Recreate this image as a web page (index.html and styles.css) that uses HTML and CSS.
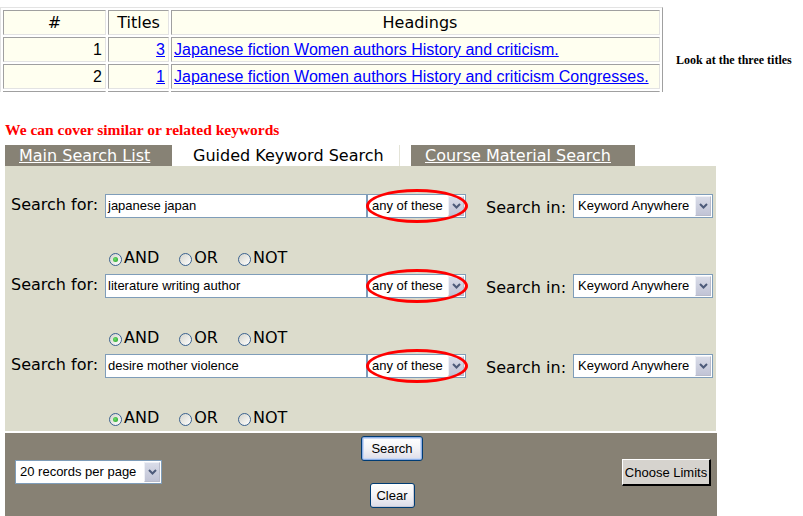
FILE: index.html
```html
<!DOCTYPE html>
<html>
<head>
<meta charset="utf-8">
<title>Guided Keyword Search</title>
<link rel="stylesheet" href="styles.css">
</head>
<body>
<div class="top">
  <div class="tablewrap">
    <table class="results">
      <tr><th class="c1">#</th><th class="c2">Titles</th><th class="c3">Headings</th></tr>
      <tr><td class="num">1</td><td class="num"><a href="#">3</a></td><td class="head"><a href="#">Japanese fiction Women authors History and criticism.</a></td></tr>
      <tr><td class="num">2</td><td class="num"><a href="#">1</a></td><td class="head"><a href="#">Japanese fiction Women authors History and criticism Congresses.</a></td></tr>
      <tr class="partial"><td></td><td></td><td></td></tr>
    </table>
  </div>
  <div class="note">Look at the three titles</div>
</div>

<p class="hint">We can cover similar or related keywords</p>

<div class="tabs">
  <div class="tab tab-main"><a href="#">Main Search List</a></div>
  <div class="tab tab-guided">Guided Keyword Search</div>
  <div class="tab tab-course"><a href="#">Course Material Search</a></div>
</div>

<div class="panel">
  <div class="srow">
    <span class="lbl-for">Search for:</span>
    <div class="field">japanese japan</div>
    <div class="sel sel-any">
      <span class="sel-text">any of these</span>
      <span class="sel-btn"><svg width="9" height="6" viewBox="0 0 9 6"><path d="M1 1 L4.5 4.5 L8 1" fill="none" stroke="#4d5b7a" stroke-width="2"/></svg></span>
      <span class="ring"></span>
    </div>
    <span class="lbl-in">Search in:</span>
    <div class="sel sel-where">
      <span class="sel-text">Keyword Anywhere</span>
      <span class="sel-btn"><svg width="9" height="6" viewBox="0 0 9 6"><path d="M1 1 L4.5 4.5 L8 1" fill="none" stroke="#4d5b7a" stroke-width="2"/></svg></span>
    </div>
  </div>
  <div class="bool">
    <span class="opt"><span class="radio checked"></span>AND</span>
    <span class="opt"><span class="radio"></span>OR</span>
    <span class="opt"><span class="radio"></span>NOT</span>
  </div>

  <div class="srow">
    <span class="lbl-for">Search for:</span>
    <div class="field">literature writing author</div>
    <div class="sel sel-any">
      <span class="sel-text">any of these</span>
      <span class="sel-btn"><svg width="9" height="6" viewBox="0 0 9 6"><path d="M1 1 L4.5 4.5 L8 1" fill="none" stroke="#4d5b7a" stroke-width="2"/></svg></span>
      <span class="ring"></span>
    </div>
    <span class="lbl-in">Search in:</span>
    <div class="sel sel-where">
      <span class="sel-text">Keyword Anywhere</span>
      <span class="sel-btn"><svg width="9" height="6" viewBox="0 0 9 6"><path d="M1 1 L4.5 4.5 L8 1" fill="none" stroke="#4d5b7a" stroke-width="2"/></svg></span>
    </div>
  </div>
  <div class="bool">
    <span class="opt"><span class="radio checked"></span>AND</span>
    <span class="opt"><span class="radio"></span>OR</span>
    <span class="opt"><span class="radio"></span>NOT</span>
  </div>

  <div class="srow">
    <span class="lbl-for">Search for:</span>
    <div class="field">desire mother violence</div>
    <div class="sel sel-any">
      <span class="sel-text">any of these</span>
      <span class="sel-btn"><svg width="9" height="6" viewBox="0 0 9 6"><path d="M1 1 L4.5 4.5 L8 1" fill="none" stroke="#4d5b7a" stroke-width="2"/></svg></span>
      <span class="ring"></span>
    </div>
    <span class="lbl-in">Search in:</span>
    <div class="sel sel-where">
      <span class="sel-text">Keyword Anywhere</span>
      <span class="sel-btn"><svg width="9" height="6" viewBox="0 0 9 6"><path d="M1 1 L4.5 4.5 L8 1" fill="none" stroke="#4d5b7a" stroke-width="2"/></svg></span>
    </div>
  </div>
  <div class="bool last">
    <span class="opt"><span class="radio checked"></span>AND</span>
    <span class="opt"><span class="radio"></span>OR</span>
    <span class="opt"><span class="radio"></span>NOT</span>
  </div>
</div>

<div class="bar">
  <div class="bar-left">
    <div class="sel sel-recs">
      <span class="sel-text">20 records per page</span>
      <span class="sel-btn"><svg width="9" height="6" viewBox="0 0 9 6"><path d="M1 1 L4.5 4.5 L8 1" fill="none" stroke="#4d5b7a" stroke-width="2"/></svg></span>
    </div>
  </div>
  <div class="bar-mid">
    <button class="xpbtn default">Search</button>
    <button class="xpbtn clear">Clear</button>
  </div>
  <div class="bar-right">
    <button class="limits">Choose Limits</button>
  </div>
</div>
</body>
</html>
```

FILE: styles.css
```css
html, body {
  margin: 0;
  padding: 0;
  background: #ffffff;
  overflow: hidden;
}
body {
  font-family: "DejaVu Sans", Verdana, sans-serif;
  color: #000;
}

/* ---------- top results table ---------- */
.top {
  display: flex;
  align-items: flex-start;
  padding-top: 7px;
}
.tablewrap {
  width: 663px;
  height: 85px;
  overflow: hidden;
  flex: none;
}
.results {
  border-collapse: separate;
  border-spacing: 2px;
  border-style: solid;
  border-width: 1px;
  border-color: #e3e3e3 #a0a0a0 #a0a0a0 #e3e3e3;
  table-layout: fixed;
  width: 663px;
}
.results th,
.results td {
  box-sizing: border-box;
  background: #fffff0;
  border-style: solid;
  border-width: 1px;
  border-color: #a0a0a0 #e3e3e3 #e3e3e3 #a0a0a0;
  padding: 0 1px;
  height: 25px;
  line-height: 23px;
  white-space: nowrap;
  overflow: hidden;
}
.results th {
  font-family: "DejaVu Sans", Verdana, sans-serif;
  font-weight: normal;
  font-size: 16px;
  text-align: center;
}
.results th.c1 { width: 103px; }
.results th.c2 { width: 61px; }
.results th.c3 { width: 489px; padding-left: 10px; }
.results td {
  font-family: "Liberation Sans", Arial, sans-serif;
  font-size: 16px;
}
.results td.head { padding-left: 2px; }
.results td.num {
  text-align: right;
  padding-right: 3px;
}
.results a {
  color: #0000ff;
  text-decoration: underline;
}
.note {
  margin-left: 13px;
  margin-top: 46px;
  font-family: "Liberation Serif", "Times New Roman", serif;
  font-weight: bold;
  font-size: 12px;
  line-height: 14px;
  white-space: nowrap;
}

/* ---------- red hint ---------- */
.hint {
  margin: 29px 0 0 5px;
  font-family: "Liberation Serif", "Times New Roman", serif;
  font-weight: bold;
  font-size: 15.5px;
  line-height: 17px;
  color: #ff0000;
}

/* ---------- tabs ---------- */
.tabs {
  display: flex;
  gap: 11px;
  margin: 7px 0 0 5px;
  height: 21px;
}
.tab {
  box-sizing: border-box;
  height: 21px;
  font-size: 16px;
  line-height: 21px;
  white-space: nowrap;
}
.tab a {
  color: #ffffff;
  text-decoration: underline;
}
.tab-main {
  width: 167px;
  padding-left: 14px;
  background: #878275;
}
.tab-guided {
  width: 217px;
  padding-left: 10px;
  background: #ffffff;
  border-right: 1px solid #e4e4d8;
}
.tab-course {
  width: 224px;
  padding-left: 14px;
  background: #878275;
}

/* ---------- panel ---------- */
.panel {
  margin-left: 5px;
  width: 711px;
  box-sizing: border-box;
  background: #dcdccc;
  padding: 28px 0 3px 6px;
}
.srow {
  display: flex;
  align-items: flex-start;
  height: 24px;
}
.lbl-for {
  width: 94px;
  flex: none;
  font-size: 16px;
  line-height: 20px;
  padding-top: 1px;
  white-space: nowrap;
}
.lbl-in {
  width: 87px;
  flex: none;
  margin-left: 20px;
  font-size: 16px;
  line-height: 20px;
  padding-top: 4px;
  white-space: nowrap;
}
.field {
  box-sizing: border-box;
  width: 262px;
  height: 24px;
  flex: none;
  border: 1px solid #7f9db9;
  background: #ffffff;
  padding-left: 2px;
  font-family: "Liberation Sans", Arial, sans-serif;
  font-size: 13px;
  line-height: 22px;
  white-space: nowrap;
}
.sel {
  position: relative;
  box-sizing: border-box;
  height: 24px;
  flex: none;
  display: flex;
  align-items: center;
  border: 1px solid #7f9db9;
  background: #ffffff;
  font-family: "Liberation Sans", Arial, sans-serif;
  font-size: 13px;
}
.sel-text {
  flex: 1;
  padding-left: 4px;
  line-height: 22px;
  white-space: nowrap;
  overflow: hidden;
}
.sel-btn {
  box-sizing: border-box;
  width: 16px;
  height: 20px;
  margin-right: 1px;
  display: flex;
  align-items: center;
  justify-content: center;
  background: linear-gradient(#d9dce8, #c1c4d6);
  border: 1px solid #eef0f6;
  border-right-color: #b9bccb;
  border-bottom-color: #b9bccb;
}
.sel-any { width: 99px; }
.sel-where { width: 140px; }
.sel-recs { width: 147px; }
.ring {
  position: absolute;
  left: -2px;
  top: -6px;
  width: 102px;
  height: 34px;
  box-sizing: border-box;
  border: 3px solid #ff0000;
  border-radius: 50%;
  pointer-events: none;
}

/* ---------- radio rows ---------- */
.bool {
  display: flex;
  align-items: flex-start;
  gap: 20px;
  height: 20px;
  margin: 30px 0 6px 98px;
}
.bool.last { margin-bottom: 0; }
.opt {
  display: flex;
  align-items: flex-start;
  font-size: 16px;
  line-height: 20px;
}
.radio {
  box-sizing: border-box;
  width: 13px;
  height: 13px;
  margin: 5px 2px 0 0;
  border: 1px solid #3a6290;
  border-radius: 50%;
  background: linear-gradient(135deg, #d4d4cc, #ffffff);
  position: relative;
}
.radio.checked::after {
  content: "";
  position: absolute;
  left: 3px;
  top: 3px;
  width: 5px;
  height: 5px;
  border-radius: 50%;
  background: radial-gradient(circle at 40% 40%, #6fe06f, #1f9a1f);
}

/* ---------- bottom bar ---------- */
.bar {
  margin: 2px 0 0 5px;
  width: 712px;
  height: 83px;
  background: #878174;
  display: flex;
  align-items: flex-start;
}
.bar-left {
  width: 356px;
  box-sizing: border-box;
  padding: 27px 0 0 10px;
  flex: none;
}
.bar-mid {
  width: 62px;
  flex: none;
  display: flex;
  flex-direction: column;
  align-items: center;
  gap: 22px;
  padding-top: 3px;
}
.bar-right {
  flex: 1;
  display: flex;
  justify-content: flex-end;
  padding: 26px 6px 0 0;
}
.xpbtn {
  box-sizing: border-box;
  height: 25px;
  padding: 0;
  font-family: "Liberation Sans", Arial, sans-serif;
  font-size: 13px;
  color: #000;
  border: 1px solid #003c74;
  border-radius: 3px;
  background: linear-gradient(#ffffff, #f3f3f6 50%, #dcdce8);
}
.xpbtn.default {
  width: 62px;
  box-shadow: inset 0 0 0 1px #8fb0e8, inset 0 0 0 2px #c8d8f4;
}
.xpbtn.clear {
  width: 45px;
  box-shadow: inset -1px -1px 0 #c9c9d6;
}
.limits {
  box-sizing: border-box;
  width: 89px;
  height: 27px;
  padding: 0;
  font-family: "Liberation Sans", Arial, sans-serif;
  font-size: 13px;
  color: #000;
  background: #d6d3ce;
  border-style: solid;
  border-width: 1px 2px 2px 1px;
  border-color: #ffffff #000000 #000000 #ffffff;
}
```
